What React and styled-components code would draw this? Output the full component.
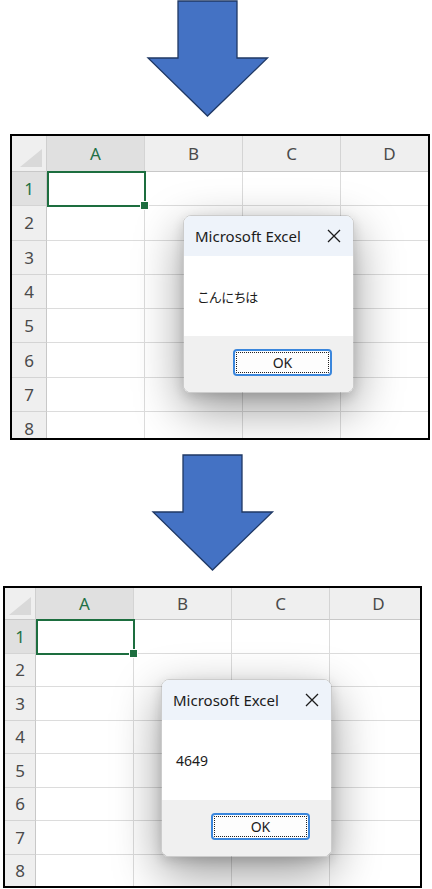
import React from 'react';
import styled, { createGlobalStyle, css } from 'styled-components';

const GlobalStyle = createGlobalStyle`
  html, body { margin: 0; padding: 0; background: #fff; }
  body { font-family: "Noto Sans", "Noto Sans CJK JP", sans-serif; }
  * { box-sizing: border-box; }
`;

const Page = styled.main`
  width: 432px;
  height: 889px;
  overflow: hidden;
  display: flex;
  flex-direction: column;
  align-items: flex-start;
  background: #fff;
`;

const ArrowSvg = styled.svg`
  display: block;
  flex: none;
  margin-left: ${(p) => p.$x}px;
  margin-top: ${(p) => p.$top}px;
`;

function DownArrow({ x, top }) {
  return (
    <ArrowSvg $x={x} $top={top} width="124" height="118" viewBox="0 0 124 118">
      <path
        d="M32 1H91V58H121.5L61.5 116L2 58H32Z"
        fill="#4472C4"
        stroke="#1F3864"
        strokeWidth="1.3"
      />
    </ArrowSvg>
  );
}

const Frame = styled.section`
  position: relative;
  flex: none;
  margin-left: ${(p) => p.$x}px;
  margin-top: ${(p) => p.$gap}px;
  width: ${(p) => p.$w}px;
  height: ${(p) => p.$h}px;
  border: 2px solid #000;
  overflow: hidden;
  background: #fff;
  display: grid;
  grid-template-columns: ${(p) => p.$rh}px repeat(4, 98px);
  grid-template-rows: ${(p) => p.$hh}px repeat(8, ${(p) => p.$row}px);
`;

const Corner = styled.div`
  background: #efefef;
  border-right: 1px solid #cfcfcf;
  border-bottom: 1px solid #c8c8c8;
  display: flex;
  align-items: flex-end;
  justify-content: flex-end;
  padding: 0 4px 4px 0;
`;

const CornerMark = styled.span`
  width: 22px;
  height: 18px;
  background: #d9d9d9;
  clip-path: polygon(100% 0, 100% 100%, 0 100%);
`;

const headText = css`
  font-family: "Noto Sans", sans-serif;
  font-size: 17px;
  display: flex;
  align-items: center;
  justify-content: center;
`;

const ColHead = styled.div`
  ${headText}
  background: ${(p) => (p.$sel ? '#e0e0e0' : '#efefef')};
  color: ${(p) => (p.$sel ? '#1e7145' : '#4a4a4a')};
  border-right: 1px solid #d4d4d4;
  border-bottom: 1px solid #c8c8c8;
`;

const RowHead = styled.div`
  ${headText}
  background: ${(p) => (p.$sel ? '#e0e0e0' : '#efefef')};
  color: ${(p) => (p.$sel ? '#1e7145' : '#4a4a4a')};
  border-right: 1px solid #c8c8c8;
  border-bottom: 1px solid #d4d4d4;
`;

const Cell = styled.div`
  position: relative;
  border-right: 1px solid #dcdcdc;
  border-bottom: 1px solid #dcdcdc;
  ${(p) =>
    p.$sel &&
    css`
      &::after {
        content: '';
        position: absolute;
        left: 0;
        top: -1px;
        right: -2px;
        bottom: -2px;
        border: 2px solid #1d6e3f;
        z-index: 2;
      }
      &::before {
        content: '';
        position: absolute;
        right: -5px;
        bottom: -5px;
        width: 7px;
        height: 7px;
        background: #1d6e3f;
        border: 1px solid #fff;
        z-index: 3;
      }
    `}
`;

const Dialog = styled.div`
  position: absolute;
  left: ${(p) => p.$left}px;
  top: ${(p) => p.$top}px;
  width: 171px;
  border-radius: 8px;
  overflow: hidden;
  border: 1px solid rgba(0, 0, 0, 0.2);
  box-shadow: 0 16px 48px rgba(0, 0, 0, 0.4), 0 4px 12px rgba(0, 0, 0, 0.14);
  display: flex;
  flex-direction: column;
  z-index: 5;
`;

const TitleBar = styled.div`
  height: 40px;
  background: #eef3fa;
  display: flex;
  align-items: center;
  justify-content: space-between;
  padding: 0 12px 0 11px;
  font-family: "Noto Sans", sans-serif;
  font-size: 15px;
  color: #1b1b1b;
`;

const Body = styled.div`
  height: 80px;
  background: #fff;
  display: flex;
  align-items: center;
  padding-left: 14px;
  font-family: "Noto Sans", "Noto Sans CJK JP", sans-serif;
  font-feature-settings: "palt";
  font-size: ${(p) => p.$size}px;
  color: #1b1b1b;
`;

const Footer = styled.div`
  height: 56px;
  background: #f0f0f0;
  display: flex;
  justify-content: flex-end;
  align-items: flex-start;
  padding: 13px 21px 0 0;
`;

const OkButton = styled.button`
  position: relative;
  width: 99px;
  height: 27px;
  border: 2px solid #3a86dc;
  border-radius: 4px;
  background: #fdfdfd;
  font-family: "Noto Sans", sans-serif;
  font-size: 14px;
  color: #1b1b1b;
  padding: 0;
  display: flex;
  align-items: center;
  justify-content: center;
  &::after {
    content: '';
    position: absolute;
    inset: 1px;
    border: 1px dotted #222;
    border-radius: 1px;
  }
`;

function CloseIcon() {
  return (
    <svg width="14" height="14" viewBox="0 0 14 14">
      <path d="M1 1L13 13M13 1L1 13" stroke="#1b1b1b" strokeWidth="1.3" />
    </svg>
  );
}

const COLS = ['A', 'B', 'C', 'D'];
const ROWS = [1, 2, 3, 4, 5, 6, 7, 8];

function Sheet({ frame, dialog, message, size }) {
  return (
    <Frame {...frame}>
      <Corner>
        <CornerMark />
      </Corner>
      {COLS.map((c) => (
        <ColHead key={c} $sel={c === 'A'}>
          {c}
        </ColHead>
      ))}
      {ROWS.map((r) => (
        <React.Fragment key={r}>
          <RowHead $sel={r === 1}>{r}</RowHead>
          {COLS.map((c) => (
            <Cell key={c} $sel={r === 1 && c === 'A'} />
          ))}
        </React.Fragment>
      ))}
      <Dialog $left={dialog.left} $top={dialog.top}>
        <TitleBar>
          <span>Microsoft Excel</span>
          <CloseIcon />
        </TitleBar>
        <Body $size={size}>{message}</Body>
        <Footer>
          <OkButton>OK</OkButton>
        </Footer>
      </Dialog>
    </Frame>
  );
}

export default function App() {
  return (
    <Page>
      <GlobalStyle />
      <DownArrow x={146} top={0} />
      <Sheet
        frame={{ $x: 10, $gap: 16, $w: 420, $h: 306, $rh: 35, $hh: 36, $row: 34.3 }}
        dialog={{ left: 171, top: 79 }}
        message="こんにちは"
        size={13}
      />
      <DownArrow x={151} top={14} />
      <Sheet
        frame={{ $x: 3, $gap: 14, $w: 419, $h: 302, $rh: 31, $hh: 32, $row: 33.5 }}
        dialog={{ left: 156, top: 91 }}
        message="4649"
        size={14}
      />
    </Page>
  );
}
